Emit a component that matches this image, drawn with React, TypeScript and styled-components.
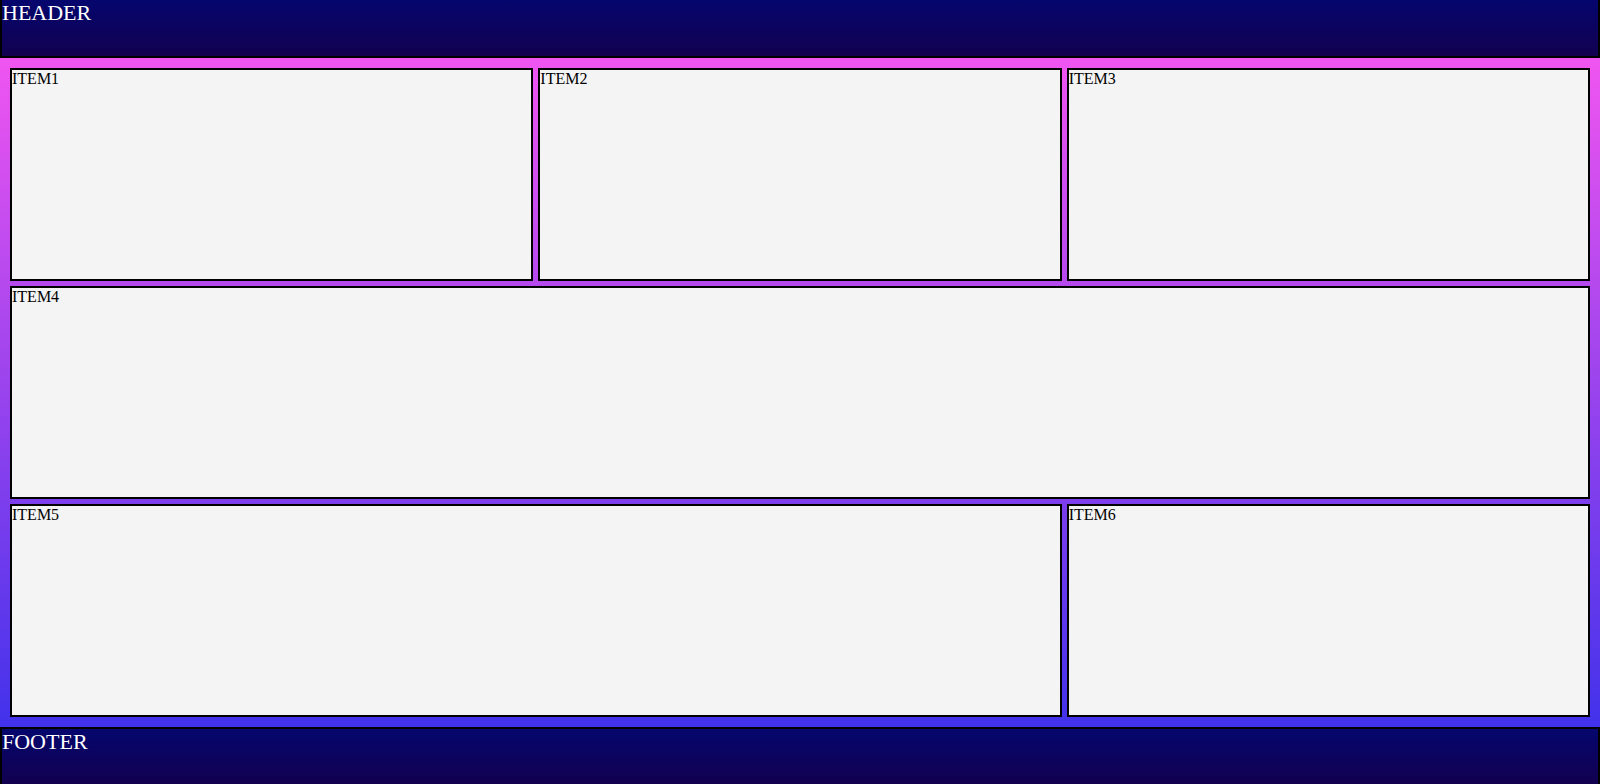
import React from "react";
import styled, { createGlobalStyle } from "styled-components";

const GlobalStyle = createGlobalStyle`
  html, body {
    margin: 0;
    padding: 0;
    font-family: "Liberation Serif", "Times New Roman", serif;
  }
  * {
    box-sizing: border-box;
  }
`;

const Page = styled.div`
  display: grid;
  grid-template-rows: 58px 1fr 57px;
  height: 100vh;
  overflow: hidden;
`;

// header / footer band, the header has no top border
const Bar = styled.div<{ $top?: boolean }>`
  background: linear-gradient(180deg, #05066e 0%, #12004f 100%);
  color: #ffffff;
  font-family: "Liberation Serif", "Times New Roman", serif;
  font-size: 22px;
  border: 2px solid #000;
  ${(p) => (p.$top ? "border-top: none;" : "border-bottom: none;")}
`;

const Main = styled.main`
  display: grid;
  grid-template-columns: repeat(3, 1fr);
  grid-template-rows: repeat(3, 1fr);
  gap: 5px;
  padding: 10px;
  background: linear-gradient(180deg, #f055f0 0%, #4232eb 100%);
`;

const Item = styled.div<{ $span?: number }>`
  grid-column: span ${(p) => p.$span || 1};
  background: #f4f4f4;
  border: 2px solid #000;
  color: #000;
  font-family: "Liberation Serif", "Times New Roman", serif;
  font-size: 16px;
`;

const items = [
  { label: "ITEM1", span: 1 },
  { label: "ITEM2", span: 1 },
  { label: "ITEM3", span: 1 },
  { label: "ITEM4", span: 3 },
  { label: "ITEM5", span: 2 },
  { label: "ITEM6", span: 1 },
];

const App: React.FC = () => (
  <>
    <GlobalStyle />
    <Page>
      <Bar $top>HEADER</Bar>
      <Main>
        {items.map((it) => (
          <Item key={it.label} $span={it.span}>
            {it.label}
          </Item>
        ))}
      </Main>
      <Bar>FOOTER</Bar>
    </Page>
  </>
);

export default App;
